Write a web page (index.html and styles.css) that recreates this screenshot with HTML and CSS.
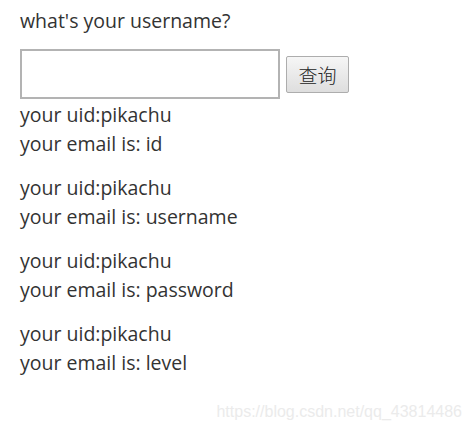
FILE: index.html
```html
<!DOCTYPE html>
<html lang="en">
<head>
    <meta charset="UTF-8">
    <title>sqli search</title>
    <link rel="stylesheet" href="styles.css">
</head>
<body>
    <div class="page">
        <p class="question">what's your username?</p>
        <form class="search" onsubmit="return false">
            <input type="text" class="query" name="username">
            <button type="submit" class="submit">查询</button>
        </form>
        <div class="results">
            <p class="row">your uid:pikachu<br>your email is: id</p>
            <p class="row">your uid:pikachu<br>your email is: username</p>
            <p class="row">your uid:pikachu<br>your email is: password</p>
            <p class="row">your uid:pikachu<br>your email is: level</p>
        </div>
    </div>
    <div class="watermark">https://blog.csdn.net/qq_43814486</div>
</body>
</html>
```

FILE: styles.css
```css
body {
    margin: 0;
    padding: 0;
    font-family: 'Open Sans', 'Noto Sans CJK SC', sans-serif;
    font-size: 19.5px;
    color: #333;
    background: #fff;
}

.page {
    padding: 6px 20px 0;
}

.question {
    margin: 0;
    line-height: 29px;
}

.search {
    display: flex;
    align-items: center;
    gap: 6px;
    margin-top: 14px;
    margin-bottom: 1px;
}

.query {
    box-sizing: border-box;
    width: 260px;
    height: 50px;
    border: 2px solid #b3b3b3;
    margin: 0;
    padding: 0 8px;
    font-size: 18px;
}

.submit {
    box-sizing: border-box;
    width: 63px;
    height: 37px;
    margin: 0;
    padding: 0;
    font-family: 'Noto Sans CJK SC', sans-serif;
    font-size: 19px;
    font-weight: 300;
    color: #222;
    border: 1px solid #adadad;
    border-radius: 2px;
    background: linear-gradient(to bottom, #f6f6f6, #dedede);
}

.row {
    margin: 0 0 15px;
    line-height: 29px;
}

.watermark {
    position: absolute;
    right: 9px;
    bottom: 11px;
    font-family: 'Liberation Sans', sans-serif;
    font-size: 16px;
    color: #ebebeb;
}
```
